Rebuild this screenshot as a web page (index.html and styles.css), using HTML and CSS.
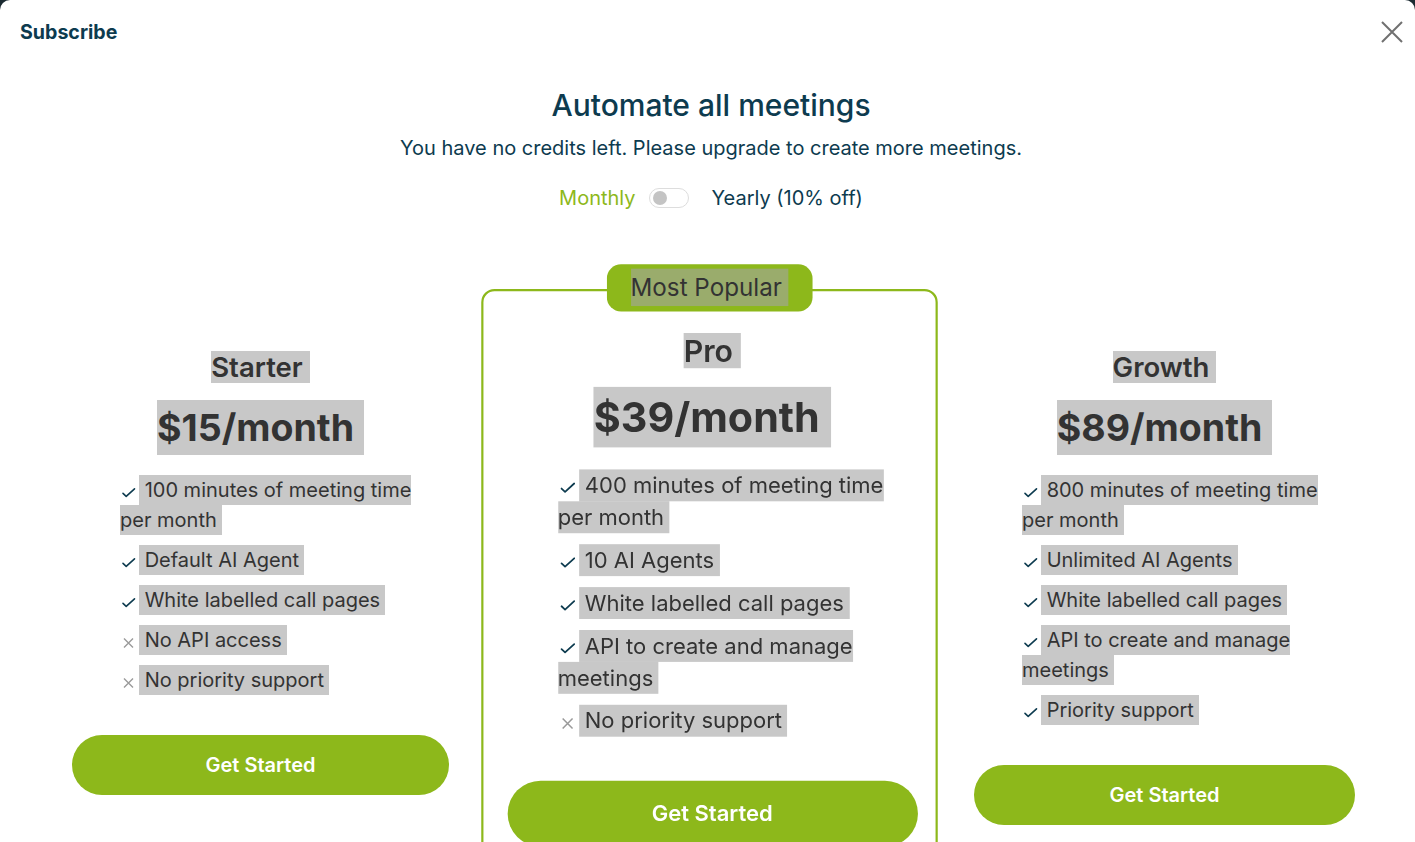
FILE: index.html
```html
<!DOCTYPE html>
<html lang="en">
<head>
<meta charset="utf-8">
<title>Subscribe</title>
<link rel="stylesheet" href="styles.css">
</head>
<body>
<div class="modal">
  <header class="modal-header">
    <h2 class="modal-title">Subscribe</h2>
    <button class="close-btn" type="button" aria-label="Close">
      <svg width="22" height="22" viewBox="0 0 22 22"><path d="M1 1 L21 21 M21 1 L1 21" stroke="#707070" stroke-width="2" fill="none"/></svg>
    </button>
  </header>
  <main class="content">
    <h1 class="headline">Automate all meetings</h1>
    <p class="subline">You have no credits left. Please upgrade to create more meetings.</p>
    <div class="billing-toggle">
      <span class="period active">Monthly</span>
      <span class="switch"><span class="knob"></span></span>
      <span class="period">Yearly (10% off)</span>
    </div>
    <div class="plans">
      <section class="plan">
        <h3 class="plan-name"><span class="hl">Starter</span></h3>
        <div class="plan-price"><span class="hl">$15/month</span></div>
        <ul class="features">
          <li><svg class="ico" viewBox="0 0 16 12"><path d="M3 6.4 L6.2 9.4 L14.5 1.8" class="check"/></svg><span class="hl"> 100 minutes of meeting time per month</span></li>
          <li><svg class="ico" viewBox="0 0 16 12"><path d="M3 6.4 L6.2 9.4 L14.5 1.8" class="check"/></svg><span class="hl"> Default AI Agent</span></li>
          <li><svg class="ico" viewBox="0 0 16 12"><path d="M3 6.4 L6.2 9.4 L14.5 1.8" class="check"/></svg><span class="hl"> White labelled call pages</span></li>
          <li><svg class="ico" viewBox="0 0 16 12"><path d="M4 1.5 L13 10.5 M13 1.5 L4 10.5" class="cross"/></svg><span class="hl"> No API access</span></li>
          <li><svg class="ico" viewBox="0 0 16 12"><path d="M4 1.5 L13 10.5 M13 1.5 L4 10.5" class="cross"/></svg><span class="hl"> No priority support</span></li>
        </ul>
        <button class="btn" type="button">Get Started</button>
      </section>
      <section class="plan featured">
        <div class="badge"><span class="hl">Most Popular</span></div>
        <h3 class="plan-name"><span class="hl">Pro</span></h3>
        <div class="plan-price"><span class="hl">$39/month</span></div>
        <ul class="features">
          <li><svg class="ico" viewBox="0 0 16 12"><path d="M3 6.4 L6.2 9.4 L14.5 1.8" class="check"/></svg><span class="hl"> 400 minutes of meeting time per month</span></li>
          <li><svg class="ico" viewBox="0 0 16 12"><path d="M3 6.4 L6.2 9.4 L14.5 1.8" class="check"/></svg><span class="hl"> 10 AI Agents</span></li>
          <li><svg class="ico" viewBox="0 0 16 12"><path d="M3 6.4 L6.2 9.4 L14.5 1.8" class="check"/></svg><span class="hl"> White labelled call pages</span></li>
          <li><svg class="ico" viewBox="0 0 16 12"><path d="M3 6.4 L6.2 9.4 L14.5 1.8" class="check"/></svg><span class="hl"> API to create and manage meetings</span></li>
          <li><svg class="ico" viewBox="0 0 16 12"><path d="M4 1.5 L13 10.5 M13 1.5 L4 10.5" class="cross"/></svg><span class="hl"> No priority support</span></li>
        </ul>
        <button class="btn" type="button">Get Started</button>
      </section>
      <section class="plan">
        <h3 class="plan-name"><span class="hl">Growth</span></h3>
        <div class="plan-price"><span class="hl">$89/month</span></div>
        <ul class="features">
          <li><svg class="ico" viewBox="0 0 16 12"><path d="M3 6.4 L6.2 9.4 L14.5 1.8" class="check"/></svg><span class="hl"> 800 minutes of meeting time per month</span></li>
          <li><svg class="ico" viewBox="0 0 16 12"><path d="M3 6.4 L6.2 9.4 L14.5 1.8" class="check"/></svg><span class="hl"> Unlimited AI Agents</span></li>
          <li><svg class="ico" viewBox="0 0 16 12"><path d="M3 6.4 L6.2 9.4 L14.5 1.8" class="check"/></svg><span class="hl"> White labelled call pages</span></li>
          <li><svg class="ico" viewBox="0 0 16 12"><path d="M3 6.4 L6.2 9.4 L14.5 1.8" class="check"/></svg><span class="hl"> API to create and manage meetings</span></li>
          <li><svg class="ico" viewBox="0 0 16 12"><path d="M3 6.4 L6.2 9.4 L14.5 1.8" class="check"/></svg><span class="hl"> Priority support</span></li>
        </ul>
        <button class="btn" type="button">Get Started</button>
      </section>
    </div>
  </main>
</div>
</body>
</html>
```
FILE: styles.css
```css
* { box-sizing: border-box; }
html, body { margin: 0; height: 100%; overflow: hidden; }
body {
  background: #1b2a31;
  font-family: Inter, "Noto Sans", "Liberation Sans", sans-serif;
}
.modal {
  background: #fff;
  height: 100vh;
  border-radius: 10px 10px 0 0;
  overflow: hidden;
}
.modal-header {
  display: flex;
  justify-content: space-between;
  align-items: center;
  height: 64px;
  padding: 0 12px 0 20px;
}
.modal-title {
  margin: 0;
  font-size: 19.6px;
  line-height: 24px;
  font-weight: 700;
  color: #0d3b4f;
}
.close-btn {
  border: 0;
  background: none;
  padding: 0;
  width: 22px;
  height: 22px;
  display: flex;
  cursor: pointer;
}
.content {
  margin-left: 7px;
  text-align: center;
}
.headline {
  margin: 23px 0 0;
  font-size: 30px;
  line-height: 36px;
  font-weight: 500;
  color: #0d3b4f;
}
.subline {
  margin: 11px 0 0;
  font-size: 20px;
  line-height: 28px;
  color: #0d3b4f;
}
.billing-toggle {
  margin-top: 22px;
  height: 28px;
  display: flex;
  justify-content: center;
  align-items: center;
  font-size: 20px;
  color: #0d3b4f;
}
.period.active { color: #8db81b; }
.switch {
  width: 40px;
  height: 20px;
  margin: 0 23px 0 13px;
  border: 1px solid #dddddd;
  border-radius: 10px;
  display: inline-flex;
  align-items: center;
  padding-left: 3px;
}
.knob {
  width: 14px;
  height: 14px;
  border-radius: 50%;
  background: #c4c4c4;
}
.plans {
  display: grid;
  grid-template-columns: 417px 415px 421px;
  column-gap: 35px;
  justify-content: start;
  align-items: start;
  margin-top: 101px;
  padding-left: 45px;
}
.plan {
  position: relative;
  border: 2px solid transparent;
  border-radius: 12px;
  padding: 36px 18px 30px;
  color: #333333;
}
.plan.featured {
  border-color: #8db81b;
  margin: -24px 2px 0 -2px;
  padding: 38px 16.5px 30px 21.5px;
  transform: scale(1.1);
  transform-origin: center top;
}
.hl {
  background: rgba(163, 163, 163, 0.6);
}
.badge {
  position: absolute;
  top: -3px;
  left: 50%;
  transform: translate(-50%, -50%);
  background: #8db81b;
  border-radius: 13px;
  padding: 4px 22px 5px;
  font-size: 22px;
  line-height: 34px;
  white-space: nowrap;
  color: #333333;
}
.badge .hl { display: inline-block; padding-right: 6px; }
.plan-name {
  margin: 0;
  text-align: center;
  font-size: 27.5px;
  line-height: 32px;
  font-weight: 600;
}
.plan-name .hl { display: inline-block; padding-right: 7px; }
.plan-price {
  margin-top: 17px;
  text-align: center;
  font-size: 37.5px;
  line-height: 55px;
  font-weight: 700;
}
.plan-price .hl { display: inline-block; padding-right: 10px; }
.features {
  list-style: none;
  margin: 20px 0 40px;
  padding: 0 4px 0 48px;
  text-align: left;
  font-size: 20px;
  line-height: 30px;
}
.features li + li { margin-top: 10px; }
.features .hl { padding: 3px 5px 3px 0; }
.featured .features { line-height: 29px; padding-left: 46px; }
.featured .features .hl { padding: 2.5px 5px 2.5px 0; }
.ico {
  width: 16px;
  height: 12px;
  margin-right: 3px;
  vertical-align: -2px;
}
.check { fill: none; stroke: #0d3b4f; stroke-width: 1.6; stroke-linecap: round; stroke-linejoin: round; }
.cross { fill: none; stroke: #9a9a9a; stroke-width: 1.4; }
.btn {
  display: block;
  width: 100%;
  height: 60px;
  border: 0;
  border-radius: 30px;
  background: #8db81b;
  color: #ffffff;
  font-family: inherit;
  font-size: 20px;
  font-weight: 600;
  cursor: pointer;
}
```
